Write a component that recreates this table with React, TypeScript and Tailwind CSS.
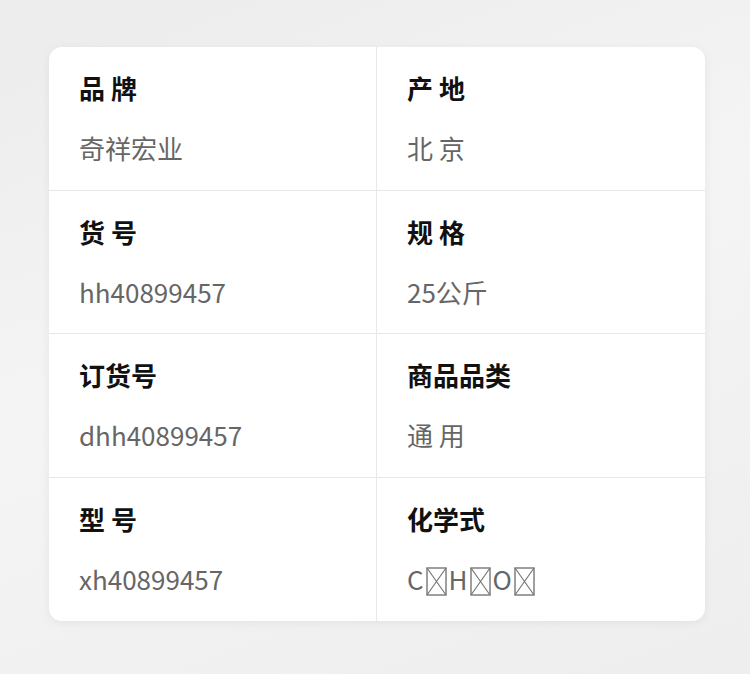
import React from 'react'

const font = { fontFamily: '"Noto Sans CJK SC", "Noto Sans", sans-serif' }

function Tofu() {
    return (
        <svg width="21" height="29" viewBox="0 0 21 29" className="inline-block align-[-6px] mx-[2px]">
            <rect x="1" y="1" width="19" height="27" fill="none" stroke="#777" strokeWidth="1.4" />
            <path d="M1 1 L20 28 M20 1 L1 28" stroke="#777" strokeWidth="1.2" />
        </svg>
    )
}

type Item = { label: string; value: React.ReactNode }

const items: Item[] = [
    { label: '品 牌', value: '奇祥宏业' },
    { label: '产 地', value: '北 京' },
    { label: '货 号', value: 'hh40899457' },
    { label: '规 格', value: '25公斤' },
    { label: '订货号', value: 'dhh40899457' },
    { label: '商品品类', value: '通 用' },
    { label: '型 号', value: 'xh40899457' },
    {
        label: '化学式',
        value: (
            <>
                C<Tofu />H<Tofu />O<Tofu />
            </>
        ),
    },
]

export default function App() {
    return (
        <div
            className="w-[750px] h-[674px] pt-[47px] pl-[49px] bg-[linear-gradient(160deg,#ececec_0%,#f4f4f4_45%,#eeeeee_100%)]"
            style={font}
        >
            <div className="w-[656px] h-[574px] bg-white rounded-[13px] shadow-[0_2px_10px_rgba(0,0,0,0.06)] grid grid-cols-2 grid-rows-4 overflow-hidden">
                {items.map((it, i) => (
                    <div
                        key={i}
                        className={
                            'pl-[30px] pt-[26px] border-[#e8e8e8] ' +
                            (i % 2 === 0 ? 'border-r ' : '') +
                            (i < 6 ? 'border-b' : '')
                        }
                    >
                        <div className="text-[26px] leading-[30px] font-bold text-[#111] whitespace-pre">{it.label}</div>
                        <div className="mt-[29px] text-[26px] leading-[32px] text-[#666] whitespace-pre">{it.value}</div>
                    </div>
                ))}
            </div>
        </div>
    )
}
